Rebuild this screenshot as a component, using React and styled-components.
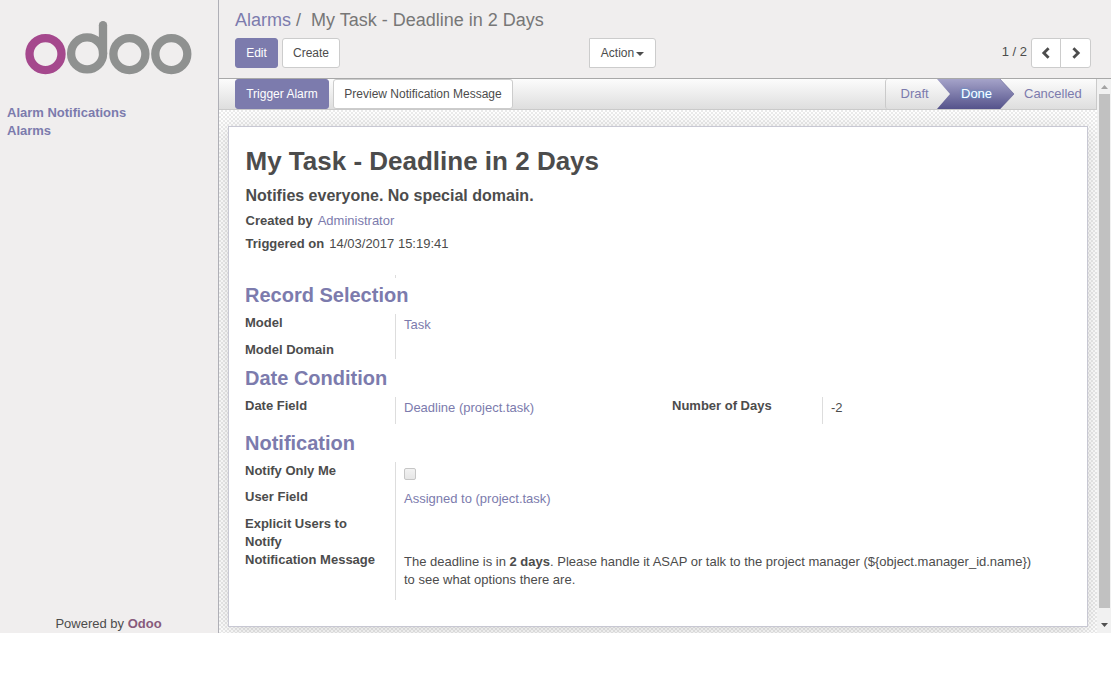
import React from "react";
import styled, { createGlobalStyle, css } from "styled-components";

const Global = createGlobalStyle`
  * { box-sizing: border-box; }
  html, body { margin: 0; padding: 0; background: #fff; overflow: hidden; }
  body { font: 13px/18px "Liberation Sans", Arial, sans-serif; color: #4c4c4c; }
`;

const Client = styled.div`
  display: flex;
  width: 1111px;
  height: 633px;
  overflow: hidden;
`;

const Sidebar = styled.aside`
  display: flex;
  flex-direction: column;
  width: 219px;
  flex: none;
  background: #f0eeee;
  border-right: 1px solid #afafb6;
`;

const Logo = styled.svg`
  display: block;
  width: 218px;
  height: 103px;
  flex: none;
`;

const Menu = styled.nav`
  display: flex;
  flex-direction: column;
  padding: 1px 7px;
  flex: 1;
`;

const MenuLink = styled.a`
  color: #7c7bad;
  font-weight: bold;
`;

const Footer = styled.div`
  height: 18px;
  padding-right: 1px;
  text-align: center;
  line-height: 18px;
  b { color: #875a7b; }
`;

const Main = styled.main`
  display: flex;
  flex-direction: column;
  flex: 1;
  min-width: 0;
`;

const ControlPanel = styled.header`
  height: 79px;
  flex: none;
  padding: 7px 20px 0 16px;
  background: #f0eeee;
  border-bottom: 1px solid #a8a8a8;
`;

const Breadcrumb = styled.div`
  height: 31px;
  font-size: 18px;
  line-height: 26px;
  color: #777;
  white-space: pre;
  a { color: #7c7bad; }
`;

const Toolbar = styled.div`
  display: grid;
  grid-template-columns: 354px 1fr auto;
  align-items: start;
`;

const ButtonRow = styled.div`
  display: flex;
  gap: 4px;
`;

const Button = styled.button`
  display: inline-flex;
  align-items: center;
  justify-content: center;
  width: ${(p) => p.$w}px;
  height: 30px;
  padding: 0;
  font: 12px/18px "Liberation Sans", Arial, sans-serif;
  white-space: nowrap;
  border-radius: ${(p) => p.$radius || "3px"};
  ${(p) =>
    p.$primary
      ? css`color: #fff; background: #7c7bad; border: 1px solid #7c7bad;`
      : css`color: #4c4c4c; background: #fff; border: 1px solid #ccc;`}
`;

const Caret = styled.span`
  margin: 2px 0 0 2px;
  border-top: 4px solid #4c4c4c;
  border-left: 4px solid transparent;
  border-right: 4px solid transparent;
`;

const Pager = styled.div`
  display: flex;
  button + button { margin-left: -1px; }
`;

const PagerText = styled.span`
  line-height: 27px;
  margin-right: 4px;
`;

const Body = styled.div`
  display: flex;
  flex: 1;
  min-height: 0;
`;

const FormView = styled.div`
  display: flex;
  flex-direction: column;
  width: 878px;
  flex: none;
`;

const StatusBar = styled.div`
  display: flex;
  justify-content: space-between;
  height: 31px;
  flex: none;
  padding-left: 16px;
  background: linear-gradient(#fcfcfc, #dedede);
  border-bottom: 1px solid #cacaca;
  border-right: 1px solid #cacaca;
`;

const Stages = styled.div`
  display: flex;
  border-left: 1px solid #cacaca;
  border-radius: 3px 0 0 3px;
`;

const Stage = styled.div`
  position: relative;
  width: ${(p) => p.$w}px;
  padding-left: ${(p) => p.$pad}px;
  line-height: 30px;
  color: ${(p) => (p.$active ? "#fff" : "#7c7bad")};
  text-shadow: ${(p) => (p.$active ? "0 0 2px #5f9fdc, 0 0 2px #4b8ed0" : "none")};
  span { position: relative; }
`;

const StageArrow = styled.svg`
  position: absolute;
  left: 0;
  top: 0;
`;

const Backdrop = styled.div`
  flex: 1;
  padding: 16px 9px 0;
  overflow: hidden;
  background: repeating-conic-gradient(#ebebeb 0 25%, #fff 0 50%) 0 0 / 4px 4px;
`;

const Sheet = styled.article`
  height: 501px;
  padding: 16px 16px 0;
  background: #fff;
  border: 1px solid #c8c8d3;
  box-shadow: 0 4px 20px rgba(0, 0, 0, 0.15);
`;

const Title = styled.h1`
  margin: 0 0 0 0.5px;
  font-size: 26px;
  line-height: 36px;
`;

const Subtitle = styled.h2`
  margin: 4px 0 4px 0.5px;
  font-size: 16px;
  line-height: 25px;
`;

const Meta = styled.div`
  margin-left: 0.5px;
  height: 23px;
  line-height: 18px;
  b { margin-right: 5px; }
`;

const RecordLink = styled.a`
  color: #7c7bad;
`;

const Value = styled.div`
  grid-column: ${(p) => p.$col || "auto"};
  padding: 2px 0 0 8px;
  border-left: 1px solid #ddd;
  color: ${(p) => (p.$link ? "#7c7bad" : "#4c4c4c")};
`;

const Group = styled.section`
  display: grid;
  grid-template-columns: 150px 277px 150px 1fr;
  grid-template-rows: ${(p) => p.$rows};
`;

const GroupStart = styled(Group)`
  margin-top: 17px;
`;

const SectionTitle = styled.h3`
  margin: 0;
  height: ${(p) => p.$h}px;
  padding-top: ${(p) => p.$top}px;
  font-size: 20px;
  line-height: 24px;
  color: #7c7bad;
`;

const Label = styled.div`
  grid-column: ${(p) => p.$col || 1};
  width: 135px;
  font-weight: bold;
`;

const Checkbox = styled.div`
  width: 12px;
  height: 12px;
  margin-top: 4px;
  border: 1px solid #c6c6c6;
  border-radius: 2px;
  background: linear-gradient(#f2f2f2, #e6e6e6);
`;

const Scrollbar = styled.div`
  display: flex;
  flex-direction: column;
  align-items: center;
  justify-content: space-between;
  flex: 1;
  background: #f1f1f1;
  padding-left: 1px;
`;

const Thumb = styled.div`
  width: 11px;
  height: 514px;
  background: #c1c1c1;
`;

const ScrollArrow = styled.svg`
  display: block;
  width: 13px;
  height: ${(p) => p.$h}px;
  flex: none;
`;

const Chevron = ({ d }) => (
  <svg width="10" height="12" viewBox="0 0 10 12" fill="none" stroke="#4c4c4c" strokeWidth="2.8">
    <path d={d} />
  </svg>
);

export default function App() {
  return (
    <>
      <Global />
      <Client>
        <Sidebar>
          <Logo viewBox="0 0 218 103" fill="none" stroke="#8f9190" strokeWidth="8.3">
            <circle cx="45.5" cy="54.1" r="16" stroke="#a5488d" />
            <circle cx="87.1" cy="53.4" r="16" />
            <path d="M103 53.4V25.2" strokeLinecap="round" />
            <circle cx="129.4" cy="54.1" r="16" />
            <circle cx="171.3" cy="54.1" r="16" />
          </Logo>
          <Menu>
            <MenuLink>Alarm Notifications</MenuLink>
            <MenuLink>Alarms</MenuLink>
          </Menu>
          <Footer>Powered by <b>Odoo</b></Footer>
        </Sidebar>
        <Main>
          <ControlPanel>
            <Breadcrumb><a>Alarms</a>{" /  My Task - Deadline in 2 Days"}</Breadcrumb>
            <Toolbar>
              <ButtonRow>
                <Button $primary $w={43}>Edit</Button>
                <Button $w={58}>Create</Button>
              </ButtonRow>
              <ButtonRow>
                <Button $w={67} $radius="0 3px 3px 0">Action<Caret /></Button>
              </ButtonRow>
              <Pager>
                <PagerText>1 / 2</PagerText>
                <Button $w={30} $radius="3px 0 0 3px"><Chevron d="M7.6 1.2 2.8 6l4.8 4.8" /></Button>
                <Button $w={31} $radius="0 3px 3px 0"><Chevron d="M2.4 1.2 7.2 6l-4.8 4.8" /></Button>
              </Pager>
            </Toolbar>
          </ControlPanel>
          <Body>
            <FormView>
              <StatusBar>
                <ButtonRow>
                  <Button $primary $w={94}>Trigger Alarm</Button>
                  <Button $w={180}>Preview Notification Message</Button>
                </ButtonRow>
                <Stages>
                  <Stage $w={50} $pad={14.5}>Draft</Stage>
                  <Stage $w={78} $pad={25} $active>
                    <StageArrow width="80" height="30" viewBox="0 0 80 30">
                      <defs>
                        <linearGradient id="stage" x1="0" y1="0" x2="0" y2="1">
                          <stop offset="0" stopColor="#a5a3c9" />
                          <stop offset="1" stopColor="#55538b" />
                        </linearGradient>
                      </defs>
                      <path d="M1 0H64L78 15 64 30H1L14 15Z" fill="url(#stage)" />
                      <path d="M64 0 78 15 64 30" fill="none" stroke="#55538b" strokeOpacity=".5" />
                    </StageArrow>
                    <span>Done</span>
                  </Stage>
                  <Stage $w={82} $pad={10}>Cancelled</Stage>
                </Stages>
              </StatusBar>
              <Backdrop>
                <Sheet>
                  <Title>My Task - Deadline in 2 Days</Title>
                  <Subtitle>Notifies everyone. No special domain.</Subtitle>
                  <Meta><b>Created by</b><RecordLink>Administrator</RecordLink></Meta>
                  <Meta><b>Triggered on</b>14/03/2017 15:19:41</Meta>
                  <GroupStart $rows="3px"><Value $col="2" /></GroupStart>
                  <SectionTitle $h={36} $top={5}>Record Selection</SectionTitle>
                  <Group $rows="27px 18px">
                    <Label>Model</Label><Value $link $col="2">Task</Value>
                    <Label>Model Domain</Label><Value $col="2" />
                  </Group>
                  <SectionTitle $h={38} $top={7}>Date Condition</SectionTitle>
                  <Group $rows="27px">
                    <Label>Date Field</Label><Value $link>Deadline (project.task)</Value>
                    <Label $col={3}>Number of Days</Label><Value>-2</Value>
                  </Group>
                  <SectionTitle $h={38} $top={7}>Notification</SectionTitle>
                  <Group $rows="26px 27px 36px 49px">
                    <Label>Notify Only Me</Label><Value $col="2"><Checkbox /></Value>
                    <Label>User Field</Label><Value $link $col="2">Assigned to (project.task)</Value>
                    <Label>Explicit Users to Notify</Label><Value $col="2" />
                    <Label>Notification Message</Label>
                    <Value $col="2 / 5">
                      The deadline is in <b>2 days</b>. Please handle it ASAP or talk to the project manager
                      {" (${object.manager_id.name})"}<br />to see what options there are.
                    </Value>
                  </Group>
                </Sheet>
              </Backdrop>
            </FormView>
            <Scrollbar>
              <ScrollArrow $h={15} viewBox="0 0 13 15"><path d="M3 10h7L6.5 6Z" fill="#a3a3a3" /></ScrollArrow>
              <Thumb />
              <ScrollArrow $h={25} viewBox="0 0 13 25"><path d="M3 15h7L6.5 19Z" fill="#505050" /></ScrollArrow>
            </Scrollbar>
          </Body>
        </Main>
      </Client>
    </>
  );
}
